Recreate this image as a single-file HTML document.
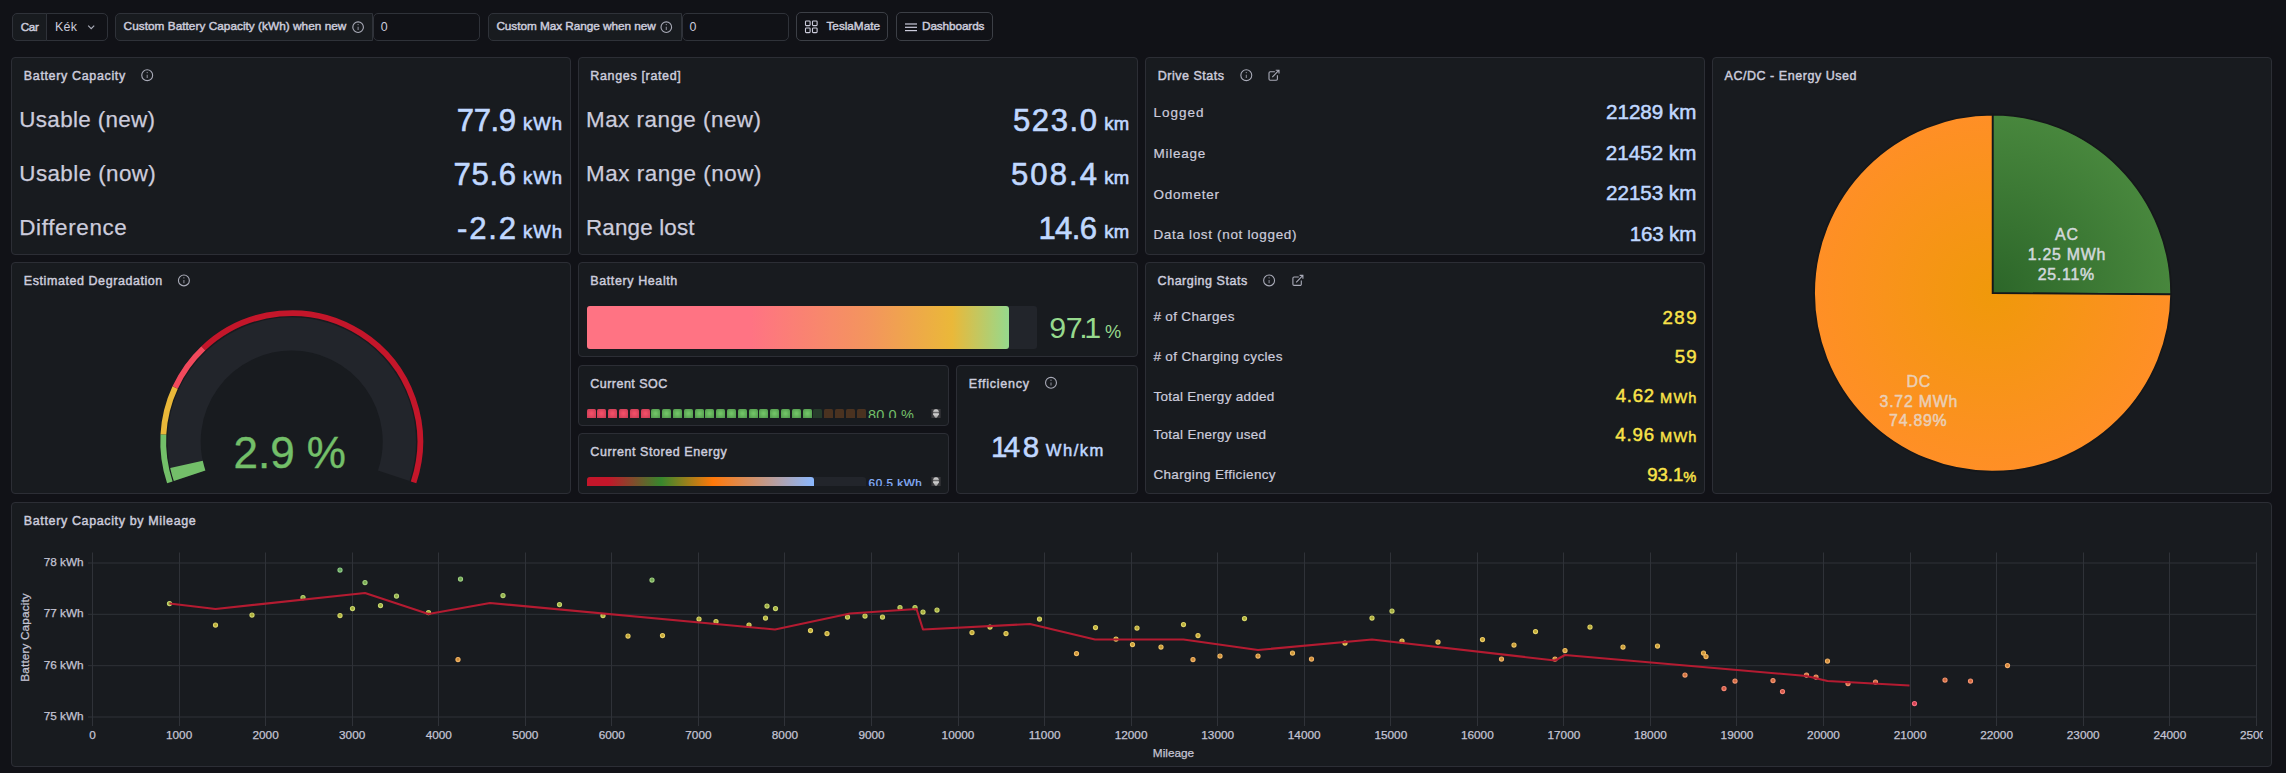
<!DOCTYPE html>
<html><head><meta charset="utf-8"><title>Battery Health</title>
<style>
html,body{margin:0;padding:0;background:#111217;}
body{width:2286px;height:773px;position:relative;overflow:hidden;font-family:"Liberation Sans",sans-serif;}
.p{position:absolute;background:#181b1f;border:1px solid #2c2e35;border-radius:4px;}
.t{position:absolute;white-space:pre;line-height:1;}
.b{position:absolute;box-sizing:border-box;}
svg{position:absolute;left:0;top:0;overflow:visible}
</style></head><body>
<div class="p" style="left:11px;top:57px;width:558px;height:196px"></div><div class="p" style="left:578px;top:57px;width:558px;height:196px"></div><div class="p" style="left:1145px;top:57px;width:558px;height:196px"></div><div class="p" style="left:1712px;top:57px;width:558px;height:435px"></div><div class="p" style="left:11px;top:262px;width:558px;height:230px"></div><div class="p" style="left:578px;top:262px;width:558px;height:93px"></div><div class="p" style="left:578px;top:365px;width:369px;height:59px"></div><div class="p" style="left:578px;top:433px;width:369px;height:59px"></div><div class="p" style="left:956px;top:365px;width:180px;height:127px"></div><div class="p" style="left:1145px;top:262px;width:558px;height:230px"></div><div class="p" style="left:11px;top:502px;width:2259px;height:263px"></div>
<div class="b" style="left:12px;top:13px;width:35px;height:28px;background:#181b1f;border:1px solid #2f3239;border-radius:5px 0 0 5px;"></div><div class="b" style="left:46px;top:13px;width:62px;height:28px;background:#111217;border:1px solid #2f3239;border-radius:0 5px 5px 0;"></div><div class="b" style="left:115px;top:13px;width:258px;height:28px;background:#181b1f;border:1px solid #2f3239;border-radius:5px 0 0 5px;"></div><div class="b" style="left:372.5px;top:13px;width:107.5px;height:28px;background:#111217;border:1px solid #2f3239;border-radius:5px;"></div><div class="b" style="left:488px;top:13px;width:194px;height:28px;background:#181b1f;border:1px solid #2f3239;border-radius:5px 0 0 5px;"></div><div class="b" style="left:681.5px;top:13px;width:107.5px;height:28px;background:#111217;border:1px solid #2f3239;border-radius:5px;"></div><div class="b" style="left:796px;top:12px;width:92px;height:29px;background:#111217;border:1px solid #3c3f46;border-radius:5px;"></div><div class="b" style="left:896px;top:12px;width:97px;height:29px;background:#111217;border:1px solid #3c3f46;border-radius:5px;"></div>
<div class="b" style="left:587px;top:306px;width:449.7px;height:43px;background:#22252b;border-radius:3px"></div><div class="b" style="left:587px;top:306px;width:422px;height:43px;border-radius:3px;background:linear-gradient(90deg,#ff7383,#ff7383 164px,#f3965c 285px,#eab839 365px,#96d98d)"></div><div class="b" style="left:587.00px;top:409px;width:9px;height:9px;background:radial-gradient(#f24f68 10%,#c63a52);border-radius:1.5px 1.5px 0 0"></div><div class="b" style="left:597.00px;top:409px;width:9px;height:9px;background:radial-gradient(#f24f68 10%,#c63a52);border-radius:1.5px 1.5px 0 0"></div><div class="b" style="left:608.00px;top:409px;width:9px;height:9px;background:radial-gradient(#f24f68 10%,#c63a52);border-radius:1.5px 1.5px 0 0"></div><div class="b" style="left:619.00px;top:409px;width:9px;height:9px;background:radial-gradient(#f24f68 10%,#c63a52);border-radius:1.5px 1.5px 0 0"></div><div class="b" style="left:630.00px;top:409px;width:9px;height:9px;background:radial-gradient(#f24f68 10%,#c63a52);border-radius:1.5px 1.5px 0 0"></div><div class="b" style="left:641.00px;top:409px;width:9px;height:9px;background:radial-gradient(#f24f68 10%,#c63a52);border-radius:1.5px 1.5px 0 0"></div><div class="b" style="left:651.00px;top:409px;width:9px;height:9px;background:radial-gradient(#72c467 10%,#4e954a);border-radius:1.5px 1.5px 0 0"></div><div class="b" style="left:662.00px;top:409px;width:9px;height:9px;background:radial-gradient(#72c467 10%,#4e954a);border-radius:1.5px 1.5px 0 0"></div><div class="b" style="left:673.00px;top:409px;width:9px;height:9px;background:radial-gradient(#72c467 10%,#4e954a);border-radius:1.5px 1.5px 0 0"></div><div class="b" style="left:684.00px;top:409px;width:9px;height:9px;background:radial-gradient(#72c467 10%,#4e954a);border-radius:1.5px 1.5px 0 0"></div><div class="b" style="left:695.00px;top:409px;width:9px;height:9px;background:radial-gradient(#72c467 10%,#4e954a);border-radius:1.5px 1.5px 0 0"></div><div class="b" style="left:705.00px;top:409px;width:9px;height:9px;background:radial-gradient(#72c467 10%,#4e954a);border-radius:1.5px 1.5px 0 0"></div><div class="b" style="left:716.00px;top:409px;width:9px;height:9px;background:radial-gradient(#72c467 10%,#4e954a);border-radius:1.5px 1.5px 0 0"></div><div class="b" style="left:727.00px;top:409px;width:9px;height:9px;background:radial-gradient(#72c467 10%,#4e954a);border-radius:1.5px 1.5px 0 0"></div><div class="b" style="left:738.00px;top:409px;width:9px;height:9px;background:radial-gradient(#72c467 10%,#4e954a);border-radius:1.5px 1.5px 0 0"></div><div class="b" style="left:749.00px;top:409px;width:9px;height:9px;background:radial-gradient(#72c467 10%,#4e954a);border-radius:1.5px 1.5px 0 0"></div><div class="b" style="left:759.00px;top:409px;width:9px;height:9px;background:radial-gradient(#72c467 10%,#4e954a);border-radius:1.5px 1.5px 0 0"></div><div class="b" style="left:770.00px;top:409px;width:9px;height:9px;background:radial-gradient(#72c467 10%,#4e954a);border-radius:1.5px 1.5px 0 0"></div><div class="b" style="left:781.00px;top:409px;width:9px;height:9px;background:radial-gradient(#72c467 10%,#4e954a);border-radius:1.5px 1.5px 0 0"></div><div class="b" style="left:792.00px;top:409px;width:9px;height:9px;background:radial-gradient(#72c467 10%,#4e954a);border-radius:1.5px 1.5px 0 0"></div><div class="b" style="left:803.00px;top:409px;width:9px;height:9px;background:radial-gradient(#72c467 10%,#4e954a);border-radius:1.5px 1.5px 0 0"></div><div class="b" style="left:813.00px;top:409px;width:9px;height:9px;background:#263a2b;border-radius:1.5px 1.5px 0 0"></div><div class="b" style="left:824.00px;top:409px;width:9px;height:9px;background:#4a3220;border-radius:1.5px 1.5px 0 0"></div><div class="b" style="left:835.00px;top:409px;width:9px;height:9px;background:#4a3220;border-radius:1.5px 1.5px 0 0"></div><div class="b" style="left:846.00px;top:409px;width:9px;height:9px;background:#4a3220;border-radius:1.5px 1.5px 0 0"></div><div class="b" style="left:857.00px;top:409px;width:9px;height:9px;background:#4a3220;border-radius:1.5px 1.5px 0 0"></div><div class="b" style="left:866px;top:400px;width:62px;height:18px;overflow:hidden"><span class="t" style="left:2.0px;top:7.9px;font-size:14.5px;color:#73bf69;letter-spacing:0.15px">80.0 %</span></div><div class="b" style="left:587px;top:477px;width:279px;height:9px;background:#22252b;border-radius:3px 3px 0 0"></div><div class="b" style="left:587px;top:477px;width:227px;height:9px;border-radius:3px 3px 0 0;background:linear-gradient(90deg,#c4162a,#c4162a 21px,#37872d 74px,#ff780a 126px,#8ab8ff)"></div><div class="b" style="left:866px;top:468px;width:62px;height:18px;overflow:hidden"><span class="t" style="left:2.6px;top:8.8px;font-size:11.7px;color:#8ab4ff;letter-spacing:0.55px;-webkit-text-stroke:0.25px #8ab4ff">60.5 kWh</span></div>
<svg width="2286" height="773" viewBox="0 0 2286 773"><circle cx="358.1" cy="27.2" r="5.3" fill="none" stroke="#a9abb8" stroke-width="1.1"/><line x1="358.1" y1="26.8" x2="358.1" y2="30.0" stroke="#a9abb8" stroke-width="1.05" opacity="0.8"/><circle cx="358.1" cy="24.599999999999998" r="0.65" fill="#a9abb8" opacity="0.85"/><circle cx="666.3" cy="27.2" r="5.3" fill="none" stroke="#a9abb8" stroke-width="1.1"/><line x1="666.3" y1="26.8" x2="666.3" y2="30.0" stroke="#a9abb8" stroke-width="1.05" opacity="0.8"/><circle cx="666.3" cy="24.599999999999998" r="0.65" fill="#a9abb8" opacity="0.85"/><circle cx="147.2" cy="75.2" r="5.45" fill="none" stroke="#a9abb8" stroke-width="1.1"/><line x1="147.2" y1="74.8" x2="147.2" y2="78.0" stroke="#a9abb8" stroke-width="1.05" opacity="0.8"/><circle cx="147.2" cy="72.60000000000001" r="0.65" fill="#a9abb8" opacity="0.85"/><circle cx="1246.3" cy="75.2" r="5.45" fill="none" stroke="#a9abb8" stroke-width="1.1"/><line x1="1246.3" y1="74.8" x2="1246.3" y2="78.0" stroke="#a9abb8" stroke-width="1.05" opacity="0.8"/><circle cx="1246.3" cy="72.60000000000001" r="0.65" fill="#a9abb8" opacity="0.85"/><path d="M1274.9 71.8H1270.2a1.2 1.2 0 0 0-1.2 1.2V79.0a1.2 1.2 0 0 0 1.2 1.2H1276.2a1.2 1.2 0 0 0 1.2-1.2V75.3" fill="none" stroke="#a9abb8" stroke-width="1.1"/><path d="M1275.7 70.2H1279V73.60000000000001M1279 70.2L1272.3 77.10000000000001" fill="none" stroke="#a9abb8" stroke-width="1.1"/><circle cx="183.9" cy="280.4" r="5.45" fill="none" stroke="#a9abb8" stroke-width="1.1"/><line x1="183.9" y1="280.0" x2="183.9" y2="283.2" stroke="#a9abb8" stroke-width="1.05" opacity="0.8"/><circle cx="183.9" cy="277.79999999999995" r="0.65" fill="#a9abb8" opacity="0.85"/><circle cx="1269.1" cy="280.4" r="5.45" fill="none" stroke="#a9abb8" stroke-width="1.1"/><line x1="1269.1" y1="280.0" x2="1269.1" y2="283.2" stroke="#a9abb8" stroke-width="1.05" opacity="0.8"/><circle cx="1269.1" cy="277.79999999999995" r="0.65" fill="#a9abb8" opacity="0.85"/><path d="M1298.8000000000002 277.0H1294.1000000000001a1.2 1.2 0 0 0-1.2 1.2V284.2a1.2 1.2 0 0 0 1.2 1.2H1300.1000000000001a1.2 1.2 0 0 0 1.2-1.2V280.5" fill="none" stroke="#a9abb8" stroke-width="1.1"/><path d="M1299.6000000000001 275.4H1302.9V278.79999999999995M1302.9 275.4L1296.2 282.29999999999995" fill="none" stroke="#a9abb8" stroke-width="1.1"/><circle cx="1051" cy="382.8" r="5.45" fill="none" stroke="#a9abb8" stroke-width="1.1"/><line x1="1051" y1="382.40000000000003" x2="1051" y2="385.6" stroke="#a9abb8" stroke-width="1.05" opacity="0.8"/><circle cx="1051" cy="380.2" r="0.65" fill="#a9abb8" opacity="0.85"/><path d="M88.2 25.6l3 3 3-3" fill="none" stroke="#a9abb8" stroke-width="1.2"/><rect x="805.5" y="21" width="4.6" height="4.6" rx="0.8" fill="none" stroke="#ccccdc" stroke-width="1.1"/><rect x="805.5" y="28" width="4.6" height="4.6" rx="0.8" fill="none" stroke="#ccccdc" stroke-width="1.1"/><rect x="812.5" y="21" width="4.6" height="4.6" rx="0.8" fill="none" stroke="#ccccdc" stroke-width="1.1"/><rect x="812.5" y="28" width="4.6" height="4.6" rx="0.8" fill="none" stroke="#ccccdc" stroke-width="1.1"/><line x1="905" y1="24.0" x2="917" y2="24.0" stroke="#ccccdc" stroke-width="1.2"/><line x1="905" y1="27.3" x2="917" y2="27.3" stroke="#ccccdc" stroke-width="1.2"/><line x1="905" y1="30.6" x2="917" y2="30.6" stroke="#ccccdc" stroke-width="1.2"/><defs><linearGradient id="sbg" x1="0" y1="0" x2="0" y2="1"><stop offset="0" stop-color="#dcdcdc"/><stop offset="1" stop-color="#9a9a9a"/></linearGradient></defs><rect x="931.4" y="409" width="9.2" height="9" fill="#3b3b3e"/><path d="M933.3 412.6V411.2a2.7 1.9 0 0 1 5.4 0V412.6Z" fill="url(#sbg)"/><path d="M933.1 413.3H938.9V414.6L936.8 417.8H935.1999999999999L933.1 414.6Z" fill="url(#sbg)"/><rect x="931.4" y="477" width="9.2" height="9" fill="#3b3b3e"/><path d="M933.3 480.6V479.2a2.7 1.9 0 0 1 5.4 0V480.6Z" fill="url(#sbg)"/><path d="M933.1 481.3H938.9V482.6L936.8 485.8H935.1999999999999L933.1 482.6Z" fill="url(#sbg)"/><path d="M189.61 475.76A107.65 107.65 0 1 1 393.79 475.76" fill="none" stroke="#22252b" stroke-width="33.3"/><path d="M189.61 475.76A107.65 107.65 0 0 1 186.48 464.36" fill="none" stroke="#73bf69" stroke-width="33.3"/><path d="M169.84 482.37A128.5 128.5 0 0 1 163.40 434.43" fill="none" stroke="#73bf69" stroke-width="5.8"/><path d="M163.40 434.43A128.5 128.5 0 0 1 175.14 387.50" fill="none" stroke="#eab839" stroke-width="5.8"/><path d="M175.14 387.50A128.5 128.5 0 0 1 203.41 348.24" fill="none" stroke="#f2495c" stroke-width="5.8"/><path d="M203.41 348.24A128.5 128.5 0 0 1 413.56 482.37" fill="none" stroke="#c4162a" stroke-width="5.8"/><text x="289.7" y="468" font-size="44" fill="#73bf69" stroke="#73bf69" stroke-width="0.4" text-anchor="middle" font-family="Liberation Sans,sans-serif">2.9 %</text><defs><radialGradient id="go" gradientUnits="userSpaceOnUse" cx="1992.6" cy="293.2" r="178.5"><stop offset="0" stop-color="#f0990a"/><stop offset="1" stop-color="#ff8f26"/></radialGradient><radialGradient id="gg" gradientUnits="userSpaceOnUse" cx="1992.6" cy="293.2" r="178.5"><stop offset="0" stop-color="#2c6629"/><stop offset="1" stop-color="#48873d"/></radialGradient></defs><path d="M1992.6 293.2L1992.6 114.69999999999999A178.5 178.5 0 0 1 2171.10 294.43Z" fill="url(#gg)" stroke="#15171a" stroke-width="1.7"/><path d="M1992.6 293.2L2171.10 294.43A178.5 178.5 0 1 1 1992.6 114.69999999999999Z" fill="url(#go)" stroke="#15171a" stroke-width="1.7"/><text x="2066.9" y="239.7" font-size="15.9" fill="#d2d8dc" stroke="#d2d8dc" stroke-width="0.5" text-anchor="middle" letter-spacing="0.75" font-family="Liberation Sans,sans-serif">AC</text><text x="2066.9" y="259.8" font-size="15.9" fill="#d2d8dc" stroke="#d2d8dc" stroke-width="0.5" text-anchor="middle" letter-spacing="0.75" font-family="Liberation Sans,sans-serif">1.25 MWh</text><text x="2066.3" y="279.8" font-size="15.9" fill="#d2d8dc" stroke="#d2d8dc" stroke-width="0.5" text-anchor="middle" letter-spacing="0.75" font-family="Liberation Sans,sans-serif">25.11%</text><text x="1918.8" y="386.6" font-size="15.9" fill="#ebcfb6" stroke="#ebcfb6" stroke-width="0.5" text-anchor="middle" letter-spacing="0.75" font-family="Liberation Sans,sans-serif">DC</text><text x="1918.8" y="406.5" font-size="15.9" fill="#ebcfb6" stroke="#ebcfb6" stroke-width="0.5" text-anchor="middle" letter-spacing="0.75" font-family="Liberation Sans,sans-serif">3.72 MWh</text><text x="1918.3" y="426.3" font-size="15.9" fill="#ebcfb6" stroke="#ebcfb6" stroke-width="0.5" text-anchor="middle" letter-spacing="0.75" font-family="Liberation Sans,sans-serif">74.89%</text><line x1="92.5" y1="552.5" x2="92.5" y2="726" stroke="#2f3238" stroke-width="1"/><line x1="179.5" y1="552.5" x2="179.5" y2="726" stroke="#2f3238" stroke-width="1"/><line x1="265.5" y1="552.5" x2="265.5" y2="726" stroke="#2f3238" stroke-width="1"/><line x1="352.5" y1="552.5" x2="352.5" y2="726" stroke="#2f3238" stroke-width="1"/><line x1="438.5" y1="552.5" x2="438.5" y2="726" stroke="#2f3238" stroke-width="1"/><line x1="525.5" y1="552.5" x2="525.5" y2="726" stroke="#2f3238" stroke-width="1"/><line x1="611.5" y1="552.5" x2="611.5" y2="726" stroke="#2f3238" stroke-width="1"/><line x1="698.5" y1="552.5" x2="698.5" y2="726" stroke="#2f3238" stroke-width="1"/><line x1="784.5" y1="552.5" x2="784.5" y2="726" stroke="#2f3238" stroke-width="1"/><line x1="871.5" y1="552.5" x2="871.5" y2="726" stroke="#2f3238" stroke-width="1"/><line x1="958.5" y1="552.5" x2="958.5" y2="726" stroke="#2f3238" stroke-width="1"/><line x1="1044.5" y1="552.5" x2="1044.5" y2="726" stroke="#2f3238" stroke-width="1"/><line x1="1131.5" y1="552.5" x2="1131.5" y2="726" stroke="#2f3238" stroke-width="1"/><line x1="1217.5" y1="552.5" x2="1217.5" y2="726" stroke="#2f3238" stroke-width="1"/><line x1="1304.5" y1="552.5" x2="1304.5" y2="726" stroke="#2f3238" stroke-width="1"/><line x1="1390.5" y1="552.5" x2="1390.5" y2="726" stroke="#2f3238" stroke-width="1"/><line x1="1477.5" y1="552.5" x2="1477.5" y2="726" stroke="#2f3238" stroke-width="1"/><line x1="1563.5" y1="552.5" x2="1563.5" y2="726" stroke="#2f3238" stroke-width="1"/><line x1="1650.5" y1="552.5" x2="1650.5" y2="726" stroke="#2f3238" stroke-width="1"/><line x1="1736.5" y1="552.5" x2="1736.5" y2="726" stroke="#2f3238" stroke-width="1"/><line x1="1823.5" y1="552.5" x2="1823.5" y2="726" stroke="#2f3238" stroke-width="1"/><line x1="1910.5" y1="552.5" x2="1910.5" y2="726" stroke="#2f3238" stroke-width="1"/><line x1="1996.5" y1="552.5" x2="1996.5" y2="726" stroke="#2f3238" stroke-width="1"/><line x1="2083.5" y1="552.5" x2="2083.5" y2="726" stroke="#2f3238" stroke-width="1"/><line x1="2169.5" y1="552.5" x2="2169.5" y2="726" stroke="#2f3238" stroke-width="1"/><line x1="2256.5" y1="552.5" x2="2256.5" y2="726" stroke="#2f3238" stroke-width="1"/><line x1="88" y1="717.0" x2="2257" y2="717.0" stroke="#2f3238" stroke-width="1"/><line x1="88" y1="665.7" x2="2257" y2="665.7" stroke="#2f3238" stroke-width="1"/><line x1="88" y1="614.3" x2="2257" y2="614.3" stroke="#2f3238" stroke-width="1"/><line x1="88" y1="563.0" x2="2257" y2="563.0" stroke="#2f3238" stroke-width="1"/><text x="83.7" y="719.9" text-anchor="end" font-size="11.8" fill="#c4c4d4" stroke="#c4c4d4" stroke-width="0.25" font-family="Liberation Sans,sans-serif">75 kWh</text><text x="83.7" y="668.6" text-anchor="end" font-size="11.8" fill="#c4c4d4" stroke="#c4c4d4" stroke-width="0.25" font-family="Liberation Sans,sans-serif">76 kWh</text><text x="83.7" y="617.2" text-anchor="end" font-size="11.8" fill="#c4c4d4" stroke="#c4c4d4" stroke-width="0.25" font-family="Liberation Sans,sans-serif">77 kWh</text><text x="83.7" y="565.9" text-anchor="end" font-size="11.8" fill="#c4c4d4" stroke="#c4c4d4" stroke-width="0.25" font-family="Liberation Sans,sans-serif">78 kWh</text><clipPath id="cc"><rect x="60" y="545" width="2203" height="220"/></clipPath><g clip-path="url(#cc)"><text x="92.5" y="738.8" text-anchor="middle" font-size="11.8" fill="#c4c4d4" stroke="#c4c4d4" stroke-width="0.25" font-family="Liberation Sans,sans-serif">0</text><text x="179.1" y="738.8" text-anchor="middle" font-size="11.8" fill="#c4c4d4" stroke="#c4c4d4" stroke-width="0.25" font-family="Liberation Sans,sans-serif">1000</text><text x="265.6" y="738.8" text-anchor="middle" font-size="11.8" fill="#c4c4d4" stroke="#c4c4d4" stroke-width="0.25" font-family="Liberation Sans,sans-serif">2000</text><text x="352.2" y="738.8" text-anchor="middle" font-size="11.8" fill="#c4c4d4" stroke="#c4c4d4" stroke-width="0.25" font-family="Liberation Sans,sans-serif">3000</text><text x="438.8" y="738.8" text-anchor="middle" font-size="11.8" fill="#c4c4d4" stroke="#c4c4d4" stroke-width="0.25" font-family="Liberation Sans,sans-serif">4000</text><text x="525.3" y="738.8" text-anchor="middle" font-size="11.8" fill="#c4c4d4" stroke="#c4c4d4" stroke-width="0.25" font-family="Liberation Sans,sans-serif">5000</text><text x="611.8" y="738.8" text-anchor="middle" font-size="11.8" fill="#c4c4d4" stroke="#c4c4d4" stroke-width="0.25" font-family="Liberation Sans,sans-serif">6000</text><text x="698.4" y="738.8" text-anchor="middle" font-size="11.8" fill="#c4c4d4" stroke="#c4c4d4" stroke-width="0.25" font-family="Liberation Sans,sans-serif">7000</text><text x="784.9" y="738.8" text-anchor="middle" font-size="11.8" fill="#c4c4d4" stroke="#c4c4d4" stroke-width="0.25" font-family="Liberation Sans,sans-serif">8000</text><text x="871.5" y="738.8" text-anchor="middle" font-size="11.8" fill="#c4c4d4" stroke="#c4c4d4" stroke-width="0.25" font-family="Liberation Sans,sans-serif">9000</text><text x="958.0" y="738.8" text-anchor="middle" font-size="11.8" fill="#c4c4d4" stroke="#c4c4d4" stroke-width="0.25" font-family="Liberation Sans,sans-serif">10000</text><text x="1044.6" y="738.8" text-anchor="middle" font-size="11.8" fill="#c4c4d4" stroke="#c4c4d4" stroke-width="0.25" font-family="Liberation Sans,sans-serif">11000</text><text x="1131.1" y="738.8" text-anchor="middle" font-size="11.8" fill="#c4c4d4" stroke="#c4c4d4" stroke-width="0.25" font-family="Liberation Sans,sans-serif">12000</text><text x="1217.7" y="738.8" text-anchor="middle" font-size="11.8" fill="#c4c4d4" stroke="#c4c4d4" stroke-width="0.25" font-family="Liberation Sans,sans-serif">13000</text><text x="1304.2" y="738.8" text-anchor="middle" font-size="11.8" fill="#c4c4d4" stroke="#c4c4d4" stroke-width="0.25" font-family="Liberation Sans,sans-serif">14000</text><text x="1390.8" y="738.8" text-anchor="middle" font-size="11.8" fill="#c4c4d4" stroke="#c4c4d4" stroke-width="0.25" font-family="Liberation Sans,sans-serif">15000</text><text x="1477.3" y="738.8" text-anchor="middle" font-size="11.8" fill="#c4c4d4" stroke="#c4c4d4" stroke-width="0.25" font-family="Liberation Sans,sans-serif">16000</text><text x="1563.9" y="738.8" text-anchor="middle" font-size="11.8" fill="#c4c4d4" stroke="#c4c4d4" stroke-width="0.25" font-family="Liberation Sans,sans-serif">17000</text><text x="1650.4" y="738.8" text-anchor="middle" font-size="11.8" fill="#c4c4d4" stroke="#c4c4d4" stroke-width="0.25" font-family="Liberation Sans,sans-serif">18000</text><text x="1737.0" y="738.8" text-anchor="middle" font-size="11.8" fill="#c4c4d4" stroke="#c4c4d4" stroke-width="0.25" font-family="Liberation Sans,sans-serif">19000</text><text x="1823.5" y="738.8" text-anchor="middle" font-size="11.8" fill="#c4c4d4" stroke="#c4c4d4" stroke-width="0.25" font-family="Liberation Sans,sans-serif">20000</text><text x="1910.1" y="738.8" text-anchor="middle" font-size="11.8" fill="#c4c4d4" stroke="#c4c4d4" stroke-width="0.25" font-family="Liberation Sans,sans-serif">21000</text><text x="1996.6" y="738.8" text-anchor="middle" font-size="11.8" fill="#c4c4d4" stroke="#c4c4d4" stroke-width="0.25" font-family="Liberation Sans,sans-serif">22000</text><text x="2083.2" y="738.8" text-anchor="middle" font-size="11.8" fill="#c4c4d4" stroke="#c4c4d4" stroke-width="0.25" font-family="Liberation Sans,sans-serif">23000</text><text x="2169.8" y="738.8" text-anchor="middle" font-size="11.8" fill="#c4c4d4" stroke="#c4c4d4" stroke-width="0.25" font-family="Liberation Sans,sans-serif">24000</text><text x="2256.3" y="738.8" text-anchor="middle" font-size="11.8" fill="#c4c4d4" stroke="#c4c4d4" stroke-width="0.25" font-family="Liberation Sans,sans-serif">25000</text></g><text x="1173.5" y="756.8" text-anchor="middle" font-size="11.8" fill="#c4c4d4" stroke="#c4c4d4" stroke-width="0.25" font-family="Liberation Sans,sans-serif">Mileage</text><text transform="translate(28.8,637.4) rotate(-90)" text-anchor="middle" letter-spacing="0.12" font-size="11.8" fill="#c4c4d4" stroke="#c4c4d4" stroke-width="0.25" font-family="Liberation Sans,sans-serif">Battery Capacity</text><circle cx="169.5" cy="603.5" r="2.05" fill="#9baf41" stroke="#c3d570" stroke-width="1.15"/><circle cx="215.5" cy="625" r="2.05" fill="#b7ac37" stroke="#ddd366" stroke-width="1.15"/><circle cx="252" cy="615" r="2.05" fill="#abaf3a" stroke="#d2d569" stroke-width="1.15"/><circle cx="303" cy="597.5" r="2.05" fill="#91ae45" stroke="#bad573" stroke-width="1.15"/><circle cx="340" cy="570" r="2.05" fill="#63a45a" stroke="#8fcc87" stroke-width="1.15"/><circle cx="340" cy="615.5" r="2.05" fill="#abaf3a" stroke="#d2d569" stroke-width="1.15"/><circle cx="352.5" cy="608.5" r="2.05" fill="#a2af3e" stroke="#c9d56d" stroke-width="1.15"/><circle cx="365" cy="582.5" r="2.05" fill="#78a950" stroke="#a3d17d" stroke-width="1.15"/><circle cx="380.5" cy="605.5" r="2.05" fill="#9daf40" stroke="#c5d56e" stroke-width="1.15"/><circle cx="396.5" cy="596" r="2.05" fill="#8fad47" stroke="#b8d475" stroke-width="1.15"/><circle cx="428.5" cy="612.5" r="2.05" fill="#a8af3c" stroke="#cfd56b" stroke-width="1.15"/><circle cx="460.5" cy="579" r="2.05" fill="#72a853" stroke="#9dcf81" stroke-width="1.15"/><circle cx="458" cy="659.5" r="2.05" fill="#ce8c37" stroke="#f3b566" stroke-width="1.15"/><circle cx="503" cy="595.5" r="2.05" fill="#8ead47" stroke="#b7d475" stroke-width="1.15"/><circle cx="559.5" cy="604.5" r="2.05" fill="#9caf40" stroke="#c4d56f" stroke-width="1.15"/><circle cx="603" cy="615.5" r="2.05" fill="#abaf3a" stroke="#d2d569" stroke-width="1.15"/><circle cx="628" cy="636" r="2.05" fill="#c2a634" stroke="#e7cd64" stroke-width="1.15"/><circle cx="662.5" cy="635.5" r="2.05" fill="#c2a634" stroke="#e7cd64" stroke-width="1.15"/><circle cx="652" cy="580" r="2.05" fill="#74a953" stroke="#9fd080" stroke-width="1.15"/><circle cx="699" cy="619" r="2.05" fill="#b0ae39" stroke="#d7d568" stroke-width="1.15"/><circle cx="716" cy="621.5" r="2.05" fill="#b3ad38" stroke="#d9d467" stroke-width="1.15"/><circle cx="749" cy="625" r="2.05" fill="#b7ac37" stroke="#ddd366" stroke-width="1.15"/><circle cx="765.5" cy="618" r="2.05" fill="#afae3a" stroke="#d5d569" stroke-width="1.15"/><circle cx="767" cy="606" r="2.05" fill="#9eaf40" stroke="#c6d56e" stroke-width="1.15"/><circle cx="775.5" cy="608.5" r="2.05" fill="#a2af3e" stroke="#c9d56d" stroke-width="1.15"/><circle cx="810.5" cy="630.5" r="2.05" fill="#bda935" stroke="#e3d165" stroke-width="1.15"/><circle cx="827" cy="633.5" r="2.05" fill="#c0a834" stroke="#e5cf64" stroke-width="1.15"/><circle cx="847.5" cy="617" r="2.05" fill="#aeae3a" stroke="#d5d569" stroke-width="1.15"/><circle cx="865" cy="616" r="2.05" fill="#acaf3a" stroke="#d3d569" stroke-width="1.15"/><circle cx="882.5" cy="617" r="2.05" fill="#aeae3a" stroke="#d5d569" stroke-width="1.15"/><circle cx="900" cy="607.5" r="2.05" fill="#a1af3f" stroke="#c9d56d" stroke-width="1.15"/><circle cx="915" cy="607.5" r="2.05" fill="#a1af3f" stroke="#c9d56d" stroke-width="1.15"/><circle cx="923" cy="612" r="2.05" fill="#a7af3c" stroke="#ced56b" stroke-width="1.15"/><circle cx="937" cy="610" r="2.05" fill="#a4af3d" stroke="#ccd56c" stroke-width="1.15"/><circle cx="972" cy="632.5" r="2.05" fill="#bfa834" stroke="#e5cf64" stroke-width="1.15"/><circle cx="990" cy="627" r="2.05" fill="#b9ab36" stroke="#dfd265" stroke-width="1.15"/><circle cx="1006" cy="633.5" r="2.05" fill="#c0a834" stroke="#e5cf64" stroke-width="1.15"/><circle cx="1039.5" cy="619" r="2.05" fill="#b0ae39" stroke="#d7d568" stroke-width="1.15"/><circle cx="1076.5" cy="653.5" r="2.05" fill="#cd9435" stroke="#f1bd65" stroke-width="1.15"/><circle cx="1095.5" cy="627.5" r="2.05" fill="#baab36" stroke="#e0d265" stroke-width="1.15"/><circle cx="1116" cy="639" r="2.05" fill="#c4a334" stroke="#e9cb64" stroke-width="1.15"/><circle cx="1132.5" cy="644.5" r="2.05" fill="#c89e34" stroke="#edc664" stroke-width="1.15"/><circle cx="1137" cy="628" r="2.05" fill="#bbaa36" stroke="#e1d165" stroke-width="1.15"/><circle cx="1161" cy="647" r="2.05" fill="#c99c34" stroke="#eec464" stroke-width="1.15"/><circle cx="1183.5" cy="624.5" r="2.05" fill="#b6ac37" stroke="#ddd366" stroke-width="1.15"/><circle cx="1193" cy="659.5" r="2.05" fill="#ce8c37" stroke="#f3b566" stroke-width="1.15"/><circle cx="1198" cy="635.5" r="2.05" fill="#c2a634" stroke="#e7cd64" stroke-width="1.15"/><circle cx="1220" cy="656" r="2.05" fill="#ce9036" stroke="#f2b965" stroke-width="1.15"/><circle cx="1244.5" cy="618.5" r="2.05" fill="#afae39" stroke="#d6d568" stroke-width="1.15"/><circle cx="1258" cy="656" r="2.05" fill="#ce9036" stroke="#f2b965" stroke-width="1.15"/><circle cx="1292.5" cy="653" r="2.05" fill="#cd9535" stroke="#f1bd65" stroke-width="1.15"/><circle cx="1311.5" cy="659" r="2.05" fill="#ce8c37" stroke="#f3b566" stroke-width="1.15"/><circle cx="1345" cy="643" r="2.05" fill="#c8a034" stroke="#edc864" stroke-width="1.15"/><circle cx="1372" cy="618" r="2.05" fill="#afae3a" stroke="#d5d569" stroke-width="1.15"/><circle cx="1392" cy="611" r="2.05" fill="#a5af3d" stroke="#cdd56c" stroke-width="1.15"/><circle cx="1402" cy="641" r="2.05" fill="#c6a234" stroke="#ebc964" stroke-width="1.15"/><circle cx="1438" cy="642" r="2.05" fill="#c7a134" stroke="#ecc964" stroke-width="1.15"/><circle cx="1482.5" cy="639.5" r="2.05" fill="#c5a334" stroke="#eaca64" stroke-width="1.15"/><circle cx="1501.5" cy="659" r="2.05" fill="#ce8c37" stroke="#f3b566" stroke-width="1.15"/><circle cx="1514" cy="645" r="2.05" fill="#c89d34" stroke="#edc564" stroke-width="1.15"/><circle cx="1535.5" cy="631.5" r="2.05" fill="#bea935" stroke="#e4d065" stroke-width="1.15"/><circle cx="1555" cy="659" r="2.05" fill="#ce8c37" stroke="#f3b566" stroke-width="1.15"/><circle cx="1565" cy="650.5" r="2.05" fill="#cb9735" stroke="#f0c065" stroke-width="1.15"/><circle cx="1590" cy="627" r="2.05" fill="#b9ab36" stroke="#dfd265" stroke-width="1.15"/><circle cx="1623" cy="647" r="2.05" fill="#c99c34" stroke="#eec464" stroke-width="1.15"/><circle cx="1657.5" cy="646" r="2.05" fill="#c99d34" stroke="#eec564" stroke-width="1.15"/><circle cx="1685" cy="675" r="2.05" fill="#d2733e" stroke="#f69e6d" stroke-width="1.15"/><circle cx="1703.5" cy="653" r="2.05" fill="#cd9535" stroke="#f1bd65" stroke-width="1.15"/><circle cx="1706" cy="656.5" r="2.05" fill="#ce9036" stroke="#f2b965" stroke-width="1.15"/><circle cx="1724" cy="688.5" r="2.05" fill="#d25b46" stroke="#f68874" stroke-width="1.15"/><circle cx="1735" cy="681" r="2.05" fill="#d26941" stroke="#f69570" stroke-width="1.15"/><circle cx="1773" cy="680.5" r="2.05" fill="#d26a41" stroke="#f69570" stroke-width="1.15"/><circle cx="1782.5" cy="691.5" r="2.05" fill="#d15647" stroke="#f58375" stroke-width="1.15"/><circle cx="1806.5" cy="675" r="2.05" fill="#d2733e" stroke="#f69e6d" stroke-width="1.15"/><circle cx="1816" cy="677" r="2.05" fill="#d2703f" stroke="#f69b6d" stroke-width="1.15"/><circle cx="1827.5" cy="661" r="2.05" fill="#cf8a38" stroke="#f4b367" stroke-width="1.15"/><circle cx="1848" cy="683.5" r="2.05" fill="#d26543" stroke="#f69171" stroke-width="1.15"/><circle cx="1875.5" cy="682" r="2.05" fill="#d26742" stroke="#f69371" stroke-width="1.15"/><circle cx="1914.5" cy="703.5" r="2.05" fill="#d03f4f" stroke="#f56d7d" stroke-width="1.15"/><circle cx="1945" cy="680" r="2.05" fill="#d26b40" stroke="#f6966f" stroke-width="1.15"/><circle cx="1970.5" cy="681" r="2.05" fill="#d26941" stroke="#f69570" stroke-width="1.15"/><circle cx="2007.5" cy="665.5" r="2.05" fill="#d0833a" stroke="#f5ad69" stroke-width="1.15"/><polyline points="169.5,603.5 215.5,609 365,593 428.5,614 490,603 775,629.5 850,613.5 916.5,609 923,629.5 1030,624 1095,639.5 1183.5,639.5 1258,650 1372,639.5 1555,660.5 1565,655 1806.5,676 1827.5,681 1909.5,685.5" fill="none" stroke="#b41b31" stroke-width="2.1" stroke-linejoin="round"/></svg>
<span class="t" style="left:20.70px;top:21.18px;font-size:11.6px;color:#ccccdc;letter-spacing:-0.294px;-webkit-text-stroke:0.45px #ccccdc;">Car</span><span class="t" style="left:54.90px;top:20.50px;font-size:12.4px;color:#ccccdc;letter-spacing:0.370px;">Kék</span><span class="t" style="left:123.60px;top:21.01px;font-size:11.8px;color:#ccccdc;letter-spacing:0.032px;-webkit-text-stroke:0.45px #ccccdc;">Custom Battery Capacity (kWh) when new</span><span class="t" style="left:380.80px;top:20.50px;font-size:12.4px;color:#ccccdc;">0</span><span class="t" style="left:496.40px;top:21.01px;font-size:11.8px;color:#ccccdc;letter-spacing:-0.057px;-webkit-text-stroke:0.45px #ccccdc;">Custom Max Range when new</span><span class="t" style="left:689.50px;top:20.50px;font-size:12.4px;color:#ccccdc;">0</span><span class="t" style="left:826.50px;top:21.01px;font-size:11.8px;color:#ccccdc;letter-spacing:-0.033px;-webkit-text-stroke:0.45px #ccccdc;">TeslaMate</span><span class="t" style="left:922.00px;top:21.01px;font-size:11.8px;color:#ccccdc;letter-spacing:-0.125px;-webkit-text-stroke:0.45px #ccccdc;">Dashboards</span><span class="t" style="left:23.80px;top:70.42px;font-size:12.5px;color:#ccccdc;letter-spacing:0.645px;-webkit-text-stroke:0.45px #ccccdc;">Battery Capacity</span><span class="t" style="left:590.30px;top:70.42px;font-size:12.5px;color:#ccccdc;letter-spacing:0.654px;-webkit-text-stroke:0.45px #ccccdc;">Ranges [rated]</span><span class="t" style="left:1157.80px;top:70.42px;font-size:12.5px;color:#ccccdc;letter-spacing:0.506px;-webkit-text-stroke:0.45px #ccccdc;">Drive Stats</span><span class="t" style="left:1724.50px;top:70.42px;font-size:12.5px;color:#ccccdc;letter-spacing:0.541px;-webkit-text-stroke:0.45px #ccccdc;">AC/DC - Energy Used</span><span class="t" style="left:23.80px;top:275.42px;font-size:12.5px;color:#ccccdc;letter-spacing:0.567px;-webkit-text-stroke:0.45px #ccccdc;">Estimated Degradation</span><span class="t" style="left:590.30px;top:275.42px;font-size:12.5px;color:#ccccdc;letter-spacing:0.599px;-webkit-text-stroke:0.45px #ccccdc;">Battery Health</span><span class="t" style="left:1157.60px;top:275.42px;font-size:12.5px;color:#ccccdc;letter-spacing:0.532px;-webkit-text-stroke:0.45px #ccccdc;">Charging Stats</span><span class="t" style="left:590.30px;top:378.42px;font-size:12.5px;color:#ccccdc;letter-spacing:0.475px;-webkit-text-stroke:0.45px #ccccdc;">Current SOC</span><span class="t" style="left:590.30px;top:446.42px;font-size:12.5px;color:#ccccdc;letter-spacing:0.572px;-webkit-text-stroke:0.45px #ccccdc;">Current Stored Energy</span><span class="t" style="left:968.80px;top:378.42px;font-size:12.5px;color:#ccccdc;letter-spacing:0.770px;-webkit-text-stroke:0.45px #ccccdc;">Efficiency</span><span class="t" style="left:23.80px;top:515.42px;font-size:12.5px;color:#ccccdc;letter-spacing:0.629px;-webkit-text-stroke:0.45px #ccccdc;">Battery Capacity by Mileage</span><span class="t" style="left:19.30px;top:109.04px;font-size:22.4px;color:#ccccdc;letter-spacing:0.345px;-webkit-text-stroke:0.25px #ccccdc;">Usable (new)</span><span class="t" style="left:523.10px;top:115.34px;font-size:18.5px;color:#c0d8ff;letter-spacing:0.950px;-webkit-text-stroke:0.6px #c0d8ff;">kWh</span><span class="t" style="left:456.80px;top:104.67px;font-size:31.1px;color:#c0d8ff;letter-spacing:-0.444px;-webkit-text-stroke:0.6px #c0d8ff;">77.9</span><span class="t" style="left:19.30px;top:163.04px;font-size:22.4px;color:#ccccdc;letter-spacing:0.418px;-webkit-text-stroke:0.25px #ccccdc;">Usable (now)</span><span class="t" style="left:523.10px;top:169.34px;font-size:18.5px;color:#c0d8ff;letter-spacing:0.950px;-webkit-text-stroke:0.6px #c0d8ff;">kWh</span><span class="t" style="left:453.50px;top:158.67px;font-size:31.1px;color:#c0d8ff;letter-spacing:0.656px;-webkit-text-stroke:0.6px #c0d8ff;">75.6</span><span class="t" style="left:19.30px;top:217.04px;font-size:22.4px;color:#ccccdc;letter-spacing:0.649px;-webkit-text-stroke:0.25px #ccccdc;">Difference</span><span class="t" style="left:523.10px;top:223.34px;font-size:18.5px;color:#c0d8ff;letter-spacing:0.950px;-webkit-text-stroke:0.6px #c0d8ff;">kWh</span><span class="t" style="left:457.00px;top:212.67px;font-size:31.1px;color:#c0d8ff;letter-spacing:1.802px;-webkit-text-stroke:0.6px #c0d8ff;">-2.2</span><span class="t" style="left:586.00px;top:109.04px;font-size:22.4px;color:#ccccdc;letter-spacing:0.500px;-webkit-text-stroke:0.25px #ccccdc;">Max range (new)</span><span class="t" style="left:1104.30px;top:115.34px;font-size:18.5px;color:#c0d8ff;letter-spacing:0.328px;-webkit-text-stroke:0.6px #c0d8ff;">km</span><span class="t" style="left:1013.00px;top:104.67px;font-size:31.1px;color:#c0d8ff;letter-spacing:1.547px;-webkit-text-stroke:0.6px #c0d8ff;">523.0</span><span class="t" style="left:586.00px;top:163.04px;font-size:22.4px;color:#ccccdc;letter-spacing:0.536px;-webkit-text-stroke:0.25px #ccccdc;">Max range (now)</span><span class="t" style="left:1104.30px;top:169.34px;font-size:18.5px;color:#c0d8ff;letter-spacing:0.328px;-webkit-text-stroke:0.6px #c0d8ff;">km</span><span class="t" style="left:1011.00px;top:158.67px;font-size:31.1px;color:#c0d8ff;letter-spacing:2.047px;-webkit-text-stroke:0.6px #c0d8ff;">508.4</span><span class="t" style="left:586.00px;top:217.04px;font-size:22.4px;color:#ccccdc;letter-spacing:0.161px;-webkit-text-stroke:0.25px #ccccdc;">Range lost</span><span class="t" style="left:1104.30px;top:223.34px;font-size:18.5px;color:#c0d8ff;letter-spacing:0.328px;-webkit-text-stroke:0.6px #c0d8ff;">km</span><span class="t" style="left:1038.50px;top:212.67px;font-size:31.1px;color:#c0d8ff;letter-spacing:-0.677px;-webkit-text-stroke:0.6px #c0d8ff;">14.6</span><span class="t" style="left:1153.40px;top:105.57px;font-size:13.5px;color:#ccccdc;letter-spacing:1.028px;-webkit-text-stroke:0.2px #ccccdc;">Logged</span><span class="t" style="left:1606.10px;top:101.56px;font-size:20.6px;color:#c0d8ff;letter-spacing:-0.036px;-webkit-text-stroke:0.5px #c0d8ff;">21289 km</span><span class="t" style="left:1153.40px;top:146.57px;font-size:13.5px;color:#ccccdc;letter-spacing:0.786px;-webkit-text-stroke:0.2px #ccccdc;">Mileage</span><span class="t" style="left:1605.80px;top:142.56px;font-size:20.6px;color:#c0d8ff;letter-spacing:0.007px;-webkit-text-stroke:0.5px #c0d8ff;">21452 km</span><span class="t" style="left:1153.40px;top:187.57px;font-size:13.5px;color:#ccccdc;letter-spacing:0.810px;-webkit-text-stroke:0.2px #ccccdc;">Odometer</span><span class="t" style="left:1606.10px;top:182.56px;font-size:20.6px;color:#c0d8ff;letter-spacing:-0.036px;-webkit-text-stroke:0.5px #c0d8ff;">22153 km</span><span class="t" style="left:1153.40px;top:227.57px;font-size:13.5px;color:#ccccdc;letter-spacing:0.668px;-webkit-text-stroke:0.2px #ccccdc;">Data lost (not logged)</span><span class="t" style="left:1629.80px;top:223.56px;font-size:20.6px;color:#c0d8ff;letter-spacing:-0.209px;-webkit-text-stroke:0.5px #c0d8ff;">163 km</span><span class="t" style="left:1153.40px;top:309.57px;font-size:13.5px;color:#ccccdc;letter-spacing:0.337px;-webkit-text-stroke:0.2px #ccccdc;"># of Charges</span><span class="t" style="left:1153.40px;top:349.57px;font-size:13.5px;color:#ccccdc;letter-spacing:0.357px;-webkit-text-stroke:0.2px #ccccdc;"># of Charging cycles</span><span class="t" style="left:1153.40px;top:389.57px;font-size:13.5px;color:#ccccdc;letter-spacing:0.268px;-webkit-text-stroke:0.2px #ccccdc;">Total Energy added</span><span class="t" style="left:1153.40px;top:427.57px;font-size:13.5px;color:#ccccdc;letter-spacing:0.289px;-webkit-text-stroke:0.2px #ccccdc;">Total Energy used</span><span class="t" style="left:1153.40px;top:467.57px;font-size:13.5px;color:#ccccdc;letter-spacing:0.341px;-webkit-text-stroke:0.2px #ccccdc;">Charging Efficiency</span><span class="t" style="left:1662.60px;top:309.26px;font-size:18.6px;color:#fae34a;letter-spacing:1.434px;-webkit-text-stroke:0.45px #fae34a;">289</span><span class="t" style="left:1674.70px;top:348.26px;font-size:18.6px;color:#fae34a;letter-spacing:1.113px;-webkit-text-stroke:0.45px #fae34a;">59</span><span class="t" style="left:1660.10px;top:390.64px;font-size:14.6px;color:#fae34a;letter-spacing:1.169px;-webkit-text-stroke:0.45px #fae34a;">MWh</span><span class="t" style="left:1615.80px;top:387.26px;font-size:18.6px;color:#fae34a;letter-spacing:0.699px;-webkit-text-stroke:0.45px #fae34a;">4.62</span><span class="t" style="left:1660.10px;top:429.64px;font-size:14.6px;color:#fae34a;letter-spacing:1.169px;-webkit-text-stroke:0.45px #fae34a;">MWh</span><span class="t" style="left:1615.30px;top:426.26px;font-size:18.6px;color:#fae34a;letter-spacing:0.866px;-webkit-text-stroke:0.45px #fae34a;">4.96</span><span class="t" style="left:1683.32px;top:469.64px;font-size:14.6px;color:#fae34a;-webkit-text-stroke:0.45px #fae34a;">%</span><span class="t" style="left:1647.30px;top:466.26px;font-size:18.6px;color:#fae34a;letter-spacing:-0.068px;-webkit-text-stroke:0.45px #fae34a;">93.1</span><span class="t" style="left:1049.20px;top:312.27px;font-size:30.4px;color:#96d98d;"><span style="letter-spacing:-0.3px">9</span><span style="letter-spacing:-3.4px">7</span><span style="letter-spacing:-3.6px">.</span>1</span><span class="t" style="left:1104.90px;top:322.51px;font-size:18.3px;color:#96d98d;">%</span><span class="t" style="left:990.90px;top:432.03px;font-size:29.5px;color:#c0d8ff;-webkit-text-stroke:0.55px #c0d8ff;"><span style="letter-spacing:-3.5px">1</span><span style="letter-spacing:2.4px">4</span>8</span><span class="t" style="left:1045.80px;top:442.95px;font-size:16.6px;color:#c0d8ff;letter-spacing:1.469px;-webkit-text-stroke:0.5px #c0d8ff;">Wh/km</span>
</body></html>
